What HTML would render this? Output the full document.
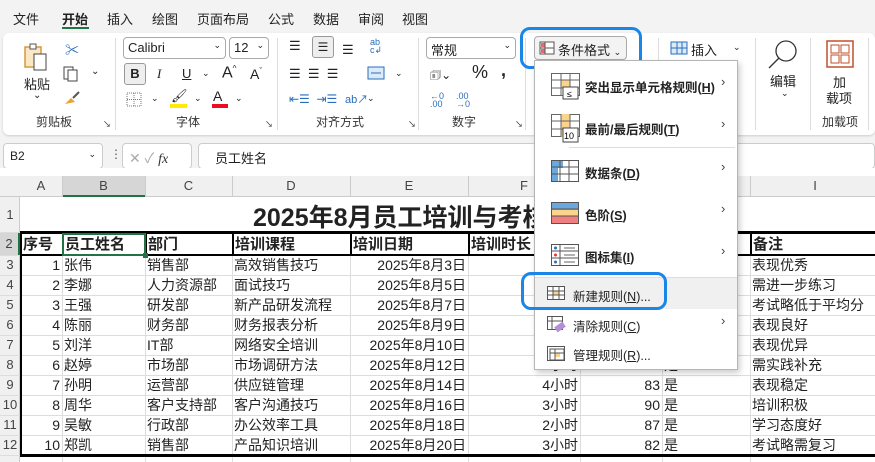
<!DOCTYPE html>
<html><head><meta charset="utf-8"><style>
*{margin:0;padding:0;box-sizing:border-box}
body{width:875px;height:462px;overflow:hidden;background:#f3f3f3;font-family:"Liberation Sans","Noto Sans CJK SC",sans-serif;font-size:12px;color:#222;position:relative}
.a{position:absolute;white-space:nowrap}
.tab{position:absolute;top:9px;font-size:13px}
.ribbon{position:absolute;left:3px;top:33px;width:872px;height:102px;background:#fff;border-radius:6px;box-shadow:0 1px 2px #ccc}
.sep{position:absolute;top:38px;width:1px;height:92px;background:#ddd}
.gl{position:absolute;top:113px;font-size:12px;color:#333}
.box{position:absolute;border:1px solid #aaa;border-radius:4px;background:#fff;height:22px;font-size:13px;padding:2px 4px}
.grid{position:absolute;left:0;top:168px;width:875px;height:294px;background:#fff}
.cell{position:absolute;height:20px;line-height:20px;font-size:14px;white-space:nowrap;overflow:hidden}
.menu{position:absolute;left:534px;top:60px;width:204px;height:310px;background:#fff;border:1px solid #b5b5b5;box-shadow:2px 3px 6px rgba(0,0,0,.2)}
.mi{position:absolute;left:50px;font-size:12.5px;font-weight:bold;color:#222}
.mi2{position:absolute;left:38px;font-size:12.5px;color:#222}
.arr{position:absolute;left:186px;font-size:13px;color:#444}
.ic{position:absolute;left:16px}
</style></head><body>
<div class="tab" style="left:13px">文件</div>
<div class="tab" style="left:62px;font-weight:bold">开始</div>
<div style="position:absolute;left:62px;top:27px;width:27px;height:2px;background:#217346"></div>
<div class="tab" style="left:107px">插入</div>
<div class="tab" style="left:152px">绘图</div>
<div class="tab" style="left:197px">页面布局</div>
<div class="tab" style="left:268px">公式</div>
<div class="tab" style="left:313px">数据</div>
<div class="tab" style="left:358px">审阅</div>
<div class="tab" style="left:402px">视图</div>

<div class="ribbon"></div>
<svg class="a" style="left:23px;top:42px" width="30" height="30"><rect x="2" y="5" width="16" height="20" fill="#fbe7c6" stroke="#d49a3a" stroke-width="1.5"/><rect x="7" y="2" width="6" height="5" fill="#fff" stroke="#555"/><rect x="11" y="12" width="12" height="16" fill="#fff" stroke="#444"/></svg>
<div class="a" style="left:24px;top:74px;font-size:13px">粘贴</div>
<div class="a" style="left:33px;top:90px;font-size:10px">⌄</div>
<div class="a" style="left:65px;top:40px;font-size:14px;color:#2a6ebb">✂</div>
<svg class="a" style="left:63px;top:66px" width="16" height="16"><rect x="1" y="1" width="9" height="12" fill="#fff" stroke="#444"/><rect x="5" y="4" width="9" height="11" fill="#fff" stroke="#444"/></svg>
<div class="a" style="left:91px;top:66px;font-size:10px">⌄</div>
<svg class="a" style="left:63px;top:90px" width="18" height="16"><path d="M2 14 L8 8 L12 12 Z" fill="#f0a030"/><path d="M10 8 L16 2" stroke="#555" stroke-width="2"/></svg>
<div class="gl" style="left:36px">剪贴板</div>
<div class="a" style="left:103px;top:119px;font-size:8px">↘</div>
<div class="sep" style="left:115px"></div>
<div class="box" style="left:123px;top:37px;width:103px">Calibri<span style="float:right;font-size:9px">⌄</span></div>
<div class="box" style="left:229px;top:37px;width:40px">12<span style="float:right;font-size:9px">⌄</span></div>
<div class="a" style="left:124px;top:63px;width:22px;height:22px;border:1px solid #999;border-radius:3px;background:#eee;font-weight:bold;text-align:center;line-height:20px;font-size:13px">B</div>
<div class="a" style="left:157px;top:66px;font-style:italic;font-size:13px;font-family:'Liberation Serif'">I</div>
<div class="a" style="left:182px;top:66px;text-decoration:underline;font-size:13px">U</div>
<div class="a" style="left:202px;top:68px;font-size:9px">⌄</div>
<div class="a" style="left:222px;top:64px;font-size:16px">A<sup style="font-size:8px">^</sup></div>
<div class="a" style="left:250px;top:66px;font-size:14px">A<sup style="font-size:8px">ˇ</sup></div>
<svg class="a" style="left:126px;top:92px" width="18" height="16"><rect x="1" y="1" width="14" height="13" fill="none" stroke="#777" stroke-dasharray="1 1"/><path d="M8 1V14M1 7.5H15" stroke="#777" stroke-dasharray="1 1"/></svg>
<div class="a" style="left:151px;top:93px;font-size:9px">⌄</div>
<div class="a" style="left:171px;top:88px;font-size:13px">🖌</div>
<div class="a" style="left:170px;top:104px;width:17px;height:4px;background:#ffea00"></div>
<div class="a" style="left:194px;top:93px;font-size:9px">⌄</div>
<div class="a" style="left:213px;top:88px;font-size:14px">A</div>
<div class="a" style="left:212px;top:104px;width:16px;height:4px;background:#e81123"></div>
<div class="a" style="left:235px;top:93px;font-size:9px">⌄</div>
<div class="gl" style="left:176px">字体</div>
<div class="a" style="left:265px;top:119px;font-size:8px">↘</div>
<div class="sep" style="left:277px"></div>
<div class="a" style="left:289px;top:38px;font-size:13px">☰</div>
<div class="a" style="left:312px;top:36px;width:22px;height:22px;border:1px solid #999;border-radius:3px;background:#eee;text-align:center;line-height:20px">☰</div>
<div class="a" style="left:342px;top:42px;font-size:13px">☰</div>
<div class="a" style="left:370px;top:38px;font-size:9px;color:#2a6ebb;line-height:8px">ab<br>c↲</div>
<div class="a" style="left:289px;top:66px;font-size:13px">☰ &nbsp;☰ &nbsp;☰</div>
<svg class="a" style="left:367px;top:66px" width="18" height="14"><rect x="1" y="1" width="16" height="12" fill="#dbeaf7" stroke="#2a6ebb"/><path d="M4 7H14" stroke="#2a6ebb"/></svg>
<div class="a" style="left:395px;top:68px;font-size:9px">⌄</div>
<div class="a" style="left:289px;top:92px;font-size:12px;color:#2a6ebb">⇤☰ &nbsp;⇥☰</div>
<div class="a" style="left:345px;top:91px;font-size:11px;color:#2a6ebb">ab↗</div>
<div class="a" style="left:367px;top:93px;font-size:9px">⌄</div>
<div class="gl" style="left:316px">对齐方式</div>
<div class="a" style="left:408px;top:119px;font-size:8px">↘</div>
<div class="sep" style="left:418px"></div>
<div class="box" style="left:426px;top:37px;width:90px">常规<span style="float:right;font-size:9px">⌄</span></div>
<div class="a" style="left:430px;top:66px;font-size:12px">🗊⌄</div>
<div class="a" style="left:472px;top:62px;font-size:18px">%</div>
<div class="a" style="left:501px;top:60px;font-size:18px;font-weight:bold">,</div>
<div class="a" style="left:430px;top:92px;font-size:9px;color:#2a6ebb;line-height:8px">←0<br>.00</div>
<div class="a" style="left:456px;top:92px;font-size:9px;color:#2a6ebb;line-height:8px">.00<br>→0</div>
<div class="gl" style="left:452px">数字</div>
<div class="a" style="left:515px;top:119px;font-size:8px">↘</div>
<div class="sep" style="left:525px"></div>
<div class="a" style="left:534px;top:36px;width:93px;height:24px;border:1px solid #aaa;border-radius:4px;background:#f3f3f3"></div>
<svg class="a" style="left:539px;top:41px" width="16" height="14"><rect x="1" y="1" width="14" height="12" fill="#fff" stroke="#555"/><rect x="2" y="2" width="4" height="4" fill="#e66"/><rect x="2" y="8" width="4" height="4" fill="#e66"/><path d="M6 1V13M1 7H15" stroke="#555"/></svg>
<div class="a" style="left:558px;top:40px;font-size:13px">条件格式 <span style="font-size:9px">⌄</span></div>
<div class="a" style="left:520px;top:27px;width:122px;height:42px;border:3px solid #1a86e8;border-radius:10px"></div>
<div class="sep" style="left:658px"></div>
<svg class="a" style="left:670px;top:41px" width="18" height="14"><rect x="1" y="1" width="16" height="12" fill="#dbeaf7" stroke="#2a6ebb"/><path d="M7 1V13M12 1V13M1 7H17" stroke="#2a6ebb"/></svg>
<div class="a" style="left:691px;top:40px;font-size:13px">插入</div>
<div class="a" style="left:733px;top:42px;font-size:9px">⌄</div>
<div class="sep" style="left:755px"></div>
<svg class="a" style="left:766px;top:38px" width="34" height="32"><circle cx="20" cy="13" r="10" fill="none" stroke="#333" stroke-width="1.3"/><path d="M13 20L3 30" stroke="#333" stroke-width="1.3"/></svg>
<div class="a" style="left:770px;top:71px;font-size:13px">编辑</div>
<div class="a" style="left:781px;top:88px;font-size:9px">⌄</div>
<div class="sep" style="left:810px"></div>
<svg class="a" style="left:826px;top:40px" width="28" height="28"><rect x="1" y="1" width="26" height="26" fill="#fff" stroke="#c0502a" stroke-width="1.5"/><rect x="5" y="5" width="8" height="8" fill="none" stroke="#c0502a"/><rect x="15" y="5" width="8" height="8" fill="none" stroke="#c0502a"/><rect x="5" y="15" width="8" height="8" fill="none" stroke="#c0502a"/><rect x="15" y="15" width="8" height="8" fill="none" stroke="#c0502a"/></svg>
<div class="a" style="left:833px;top:72px;font-size:13px">加</div>
<div class="a" style="left:826px;top:88px;font-size:13px">载项</div>
<div class="gl" style="left:822px">加载项</div>
<div class="sep" style="left:868px"></div>

<div class="a" style="left:3px;top:143px;width:100px;height:26px;background:#fff;border:1px solid #ccc;border-radius:4px;padding:5px 6px;font-size:12px">B2<span style="float:right;font-size:9px">⌄</span></div>
<div class="a" style="left:110px;top:147px;font-size:12px;color:#555">⋮</div>
<div class="a" style="left:122px;top:143px;width:70px;height:26px;background:#fff;border:1px solid #ccc;border-radius:4px;padding:4px 6px;font-size:14px;color:#aaa">✕ ✓ <i style="color:#333;font-family:'Liberation Serif'">fx</i></div>
<div class="a" style="left:198px;top:143px;width:677px;height:26px;background:#fff;border:1px solid #ccc;border-radius:4px;padding:4px 16px;font-size:13px">员工姓名</div>

<div class="grid"></div>
<div id="g"></div>
<script>
const cols=[[20,62,'A'],[62,145,'B'],[145,232,'C'],[232,350,'D'],[350,468,'E'],[468,580,'F'],[580,662,'G'],[662,750,'H'],[750,880,'I']];
let h='';
h+=`<div class="a" style="left:0;top:176px;width:875px;height:21px;background:#f0f0f0;border-bottom:1px solid #ccc"></div>`;
h+=`<div class="a" style="left:0;top:197px;width:20px;height:265px;background:#f0f0f0;border-right:1px solid #ccc"></div>`;
h+=`<div class="a" style="left:62px;top:176px;width:83px;height:21px;background:#d6d6d6;border-bottom:2px solid #217346"></div>`;
for(const [l,r,n] of cols){h+=`<div class="a" style="left:${l}px;top:178px;width:${r-l}px;text-align:center;font-size:13px;color:#444">${n}</div>`;
h+=`<div class="a" style="left:${r}px;top:176px;width:1px;height:21px;background:#ccc"></div>`;
h+=`<div class="a" style="left:${r}px;top:233px;width:1px;height:229px;background:#ddd"></div>`;}
const rows=[[197,232],[233,255]];for(let i=0;i<10;i++)rows.push([255+i*20,275+i*20]);
rows.forEach(([t,b],i)=>{h+=`<div class="a" style="left:0;top:${t}px;width:20px;line-height:${b-t}px;text-align:center;font-size:13px;color:#444;${i==1?'background:#d6d6d6;border-right:2px solid #217346;':''}">${i+1}</div>`;
h+=`<div class="a" style="left:0;top:${b}px;width:875px;height:1px;background:#ddd"></div>`;});
h+=`<div class="a" style="left:20px;top:231px;width:860px;height:3px;background:#000"></div>`;
h+=`<div class="a" style="left:20px;top:254px;width:860px;height:2px;background:#000"></div>`;
h+=`<div class="a" style="left:20px;top:454px;width:860px;height:3px;background:#000"></div>`;
h+=`<div class="a" style="left:20px;top:231px;width:2px;height:226px;background:#000"></div>`;
h+=`<div class="a" style="left:253px;top:198px;font-size:25px;font-weight:bold">2025年8月员工培训与考核记录表</div>`;
const hd=['序号','员工姓名','部门','培训课程','培训日期','培训时长','考核分数','是否合格','备注'];
hd.forEach((t,i)=>{h+=`<div class="cell" style="left:${cols[i][0]+3}px;top:234px;width:${cols[i][1]-cols[i][0]-4}px;font-size:15px;font-weight:bold;line-height:21px">${t}</div>`;
h+=`<div class="a" style="left:${cols[i][1]}px;top:233px;width:2px;height:22px;background:#000"></div>`;});
h+=`<div class="a" style="left:62px;top:233px;width:84px;height:23px;border:2px solid #217346"></div><div class="a" style="left:143px;top:253px;width:5px;height:5px;background:#217346"></div>`;
const d=[['张伟','销售部','高效销售技巧',3,'3',92,'表现优秀'],['李娜','人力资源部','面试技巧',5,'2',78,'需进一步练习'],['王强','研发部','新产品研发流程',7,'4',75,'考试略低于平均分'],['陈丽','财务部','财务报表分析',9,'3',88,'表现良好'],['刘洋','IT部','网络安全培训',10,'4',95,'表现优异'],['赵婷','市场部','市场调研方法',12,'3',80,'需实践补充'],['孙明','运营部','供应链管理',14,'4',83,'表现稳定'],['周华','客户支持部','客户沟通技巧',16,'3',90,'培训积极'],['吴敏','行政部','办公效率工具',18,'2',87,'学习态度好'],['郑凯','销售部','产品知识培训',20,'3',82,'考试略需复习']];
d.forEach((r,i)=>{const t=255+i*20;
const v=[[0,i+1,'right'],[1,r[0]],[2,r[1]],[3,r[2]],[4,'2025年8月'+r[3]+'日','right'],[5,r[4]+'小时','right'],[6,r[5],'right'],[7,'是'],[8,r[6]]];
for(const [c,txt,al] of v){h+=`<div class="cell" style="left:${cols[c][0]+2}px;top:${t}px;width:${cols[c][1]-cols[c][0]-4}px;text-align:${al||'left'}">${txt}</div>`;}});
document.getElementById('g').innerHTML=h;
</script>

<div class="menu">
<svg class="ic" style="top:12px" width="36" height="34"><rect x="0.5" y="0.5" width="28" height="22" fill="#fff" stroke="#666"/><rect x="10" y="7" width="9" height="8" fill="#fbd38a"/><path d="M10 0V23M19 0V23M0 7H29M0 15H29" stroke="#666"/><rect x="12" y="14" width="15" height="12" fill="#fff" stroke="#444"/><text x="16" y="24" font-size="9" font-family="Liberation Sans">≤</text></svg>
<div class="mi" style="top:16px">突出显示单元格规则(<u>H</u>)</div><div class="arr" style="top:13px">›</div>
<svg class="ic" style="top:53px" width="36" height="34"><rect x="0.5" y="0.5" width="28" height="22" fill="#fff" stroke="#666"/><rect x="10" y="0" width="9" height="23" fill="#fbd38a"/><path d="M10 0V23M19 0V23M0 7H29M0 15H29" stroke="#666"/><rect x="12" y="14" width="15" height="14" fill="#fff" stroke="#444"/><text x="13" y="25" font-size="9" font-family="Liberation Sans">10</text></svg>
<div class="mi" style="top:58px">最前/最后规则(<u>T</u>)</div><div class="arr" style="top:55px">›</div>
<div class="a" style="left:34px;top:86px;width:166px;height:1px;background:#ddd"></div>
<svg class="ic" style="top:99px" width="30" height="24"><rect x="0.5" y="0.5" width="27" height="21" fill="#fff" stroke="#555"/><rect x="1" y="1" width="6" height="20" fill="#6aa9e0"/><rect x="7" y="1" width="5" height="7" fill="#6aa9e0"/><path d="M9 0V22M18 0V22M0 7H28M0 14H28" stroke="#555"/></svg>
<div class="mi" style="top:102px">数据条(<u>D</u>)</div><div class="arr" style="top:98px">›</div>
<svg class="ic" style="top:141px" width="30" height="24"><rect x="0.5" y="0.5" width="27" height="21" fill="#6aa9e0" stroke="#555"/><rect x="1" y="8" width="26" height="6" fill="#fbd38a"/><rect x="1" y="14" width="26" height="7" fill="#f08080"/><path d="M0 7H28M0 14H28" stroke="#555"/></svg>
<div class="mi" style="top:144px">色阶(<u>S</u>)</div><div class="arr" style="top:140px">›</div>
<svg class="ic" style="top:183px" width="30" height="24"><rect x="0.5" y="0.5" width="27" height="21" fill="#fff" stroke="#555"/><path d="M9 0V22M0 7H28M0 14H28" stroke="#555"/><circle cx="4.5" cy="4" r="1.5" fill="#2a6ebb"/><circle cx="4.5" cy="11" r="1.5" fill="#e33"/><circle cx="4.5" cy="18" r="1.5" fill="#2a6ebb"/><path d="M13 4H24M13 11H24M13 18H24" stroke="#666"/></svg>
<div class="mi" style="top:186px">图标集(<u>I</u>)</div><div class="arr" style="top:182px">›</div>
<div class="a" style="left:0;top:216px;width:202px;height:1px;background:#ddd"></div>
<div class="a" style="left:0;top:217px;width:202px;height:31px;background:#f0f0f0"></div>
<svg class="a" style="left:12px;top:225px" width="20" height="16"><rect x="0.5" y="0.5" width="17" height="13" fill="#fff" stroke="#555"/><rect x="6" y="5" width="6" height="4" fill="#fbd38a"/><path d="M6 0V14M12 0V14M0 5H18M0 9H18" stroke="#555"/></svg>
<div class="mi2" style="top:225px">新建规则(<u>N</u>)...</div>
<svg class="a" style="left:12px;top:255px" width="20" height="18"><rect x="0.5" y="0.5" width="15" height="13" fill="#fff" stroke="#555"/><path d="M5 0V14M0 5H16" stroke="#555"/><rect x="8" y="8" width="10" height="6" fill="#b48fd8" transform="rotate(-35 13 11)"/></svg>
<div class="mi2" style="top:255px">清除规则(<u>C</u>)</div><div class="arr" style="top:252px">›</div>
<svg class="a" style="left:12px;top:285px" width="20" height="16"><rect x="0.5" y="0.5" width="17" height="14" fill="#fff" stroke="#555"/><rect x="3" y="3" width="14" height="11" fill="#fff" stroke="#555"/><rect x="8" y="7" width="5" height="4" fill="#fbd38a"/><path d="M8 3V14M3 7H17" stroke="#555"/></svg>
<div class="mi2" style="top:284px">管理规则(<u>R</u>)...</div>
</div>
<div class="a" style="left:521px;top:272px;width:146px;height:38px;border:3px solid #1a86e8;border-radius:10px"></div>
</body></html>
